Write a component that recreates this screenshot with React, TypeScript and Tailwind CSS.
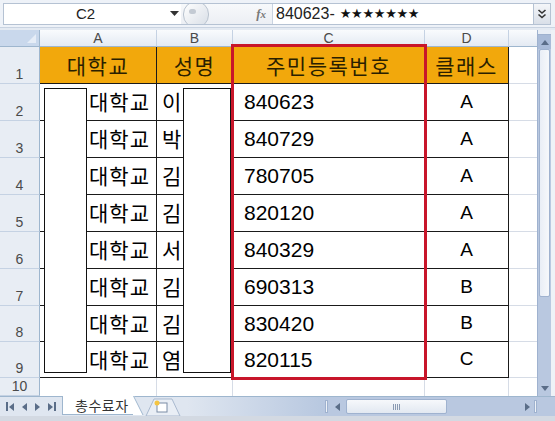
import React from "react";

const KR = { fontFamily: '"Noto Sans CJK KR", "Noto Sans", sans-serif' };
const AR = { fontFamily: '"Liberation Sans", Arial, sans-serif' };

const rows = [
  { n: "2", name: "이", id: "840623", cls: "A", h: "h-[37px]" },
  { n: "3", name: "박", id: "840729", cls: "A", h: "h-[37px]" },
  { n: "4", name: "김", id: "780705", cls: "A", h: "h-[37px]" },
  { n: "5", name: "김", id: "820120", cls: "A", h: "h-[37px]" },
  { n: "6", name: "서", id: "840329", cls: "A", h: "h-[37px]" },
  { n: "7", name: "김", id: "690313", cls: "B", h: "h-[37px]" },
  { n: "8", name: "김", id: "830420", cls: "B", h: "h-[36px]" },
  { n: "9", name: "염", id: "820115", cls: "C", h: "h-[36px]" },
];

function RowHead({ n }: { n: string }) {
  return (
    <div
      className="w-[40px] h-full shrink-0 flex items-end justify-center pb-[1px] bg-[#e8edf4] border-r border-b border-r-[#9eb6ce] border-b-[#c5d2e3] text-[14px] leading-[16px] text-[#4a4a4a]"
      style={AR}
    >
      {n}
    </div>
  );
}

function ColHead({ w, label }: { w: string; label: string }) {
  return (
    <div
      className={`${w} h-full shrink-0 flex items-center justify-center bg-gradient-to-b from-[#f9fbfd] to-[#e4eaf3] border-r border-b border-r-[#c5d2e3] border-b-[#9eb6ce] text-[14px] text-[#4a4a4a]`}
      style={AR}
    >
      {label}
    </div>
  );
}

function Tri({ dir }: { dir: "l" | "r" | "u" | "d" }) {
  const pts =
    dir === "l" ? "6,1 6,9 1,5" : dir === "r" ? "1,1 1,9 6,5" : dir === "u" ? "1,7 9,7 5,2" : "1,2 9,2 5,7";
  return (
    <svg width={dir === "l" || dir === "r" ? 7 : 10} height={dir === "l" || dir === "r" ? 10 : 9}>
      <polygon points={pts} fill="#5a6d88" />
    </svg>
  );
}

export default function App() {
  return (
    <div className="w-[555px] h-[421px] bg-[#e4eaf2] flex flex-col overflow-hidden select-none">
      {/* Formula bar */}
      <div className="h-[28px] shrink-0 flex items-stretch pt-[3px] pb-[2px] pl-[3px] pr-[4px] bg-[#eef2f8] border-b border-[#c9d3e1]">
        <div className="flex flex-1 border border-[#b5c2d3] bg-white">
          <div className="w-[163px] flex items-center justify-center text-[15px] text-[#222]" style={AR}>
            C2
          </div>
          <div className="w-[14px] flex items-center justify-center">
            <svg width="9" height="6">
              <polygon points="0,0 9,0 4.5,5" fill="#333" />
            </svg>
          </div>
          <div className="w-[92px] relative flex items-center justify-end pr-[6px] bg-gradient-to-b from-[#f7f9fb] to-[#eceff4] border-r border-[#c9d3e1] overflow-hidden">
            <div className="absolute left-[2px] top-[-3px] w-[26px] h-[27px] rounded-full border border-[#b9c3cf] bg-gradient-to-br from-[#ffffff] to-[#d8dee6]" />
            <div className="absolute left-[8px] top-[5px] w-[7px] h-[5px] rounded-full bg-[#c3cad3]" />
            <span className="text-[13px] italic font-bold text-[#7a7a7a]" style={{ fontFamily: '"Liberation Serif", serif' }}>
              f<span className="text-[11px]">x</span>
            </span>
          </div>
          <div className="flex-1 flex items-center pl-[3px] text-[16px] text-[#222]" style={AR}>
            840623-
            <span className="ml-[5px] text-[13px] tracking-[-0.3px] text-[#111]" style={{ fontFamily: '"DejaVu Sans", sans-serif' }}>
              ★★★★★★★
            </span>
          </div>
          <div className="w-[17px] flex items-center justify-center bg-gradient-to-b from-[#f4f6f9] to-[#d9dfe8] border-l border-[#b5c2d3]">
            <svg width="10" height="12" viewBox="0 0 10 12">
              <path d="M1.5 2 L5 5 L8.5 2 M1.5 6.5 L5 9.5 L8.5 6.5" stroke="#333" strokeWidth="1.6" fill="none" />
            </svg>
          </div>
        </div>
      </div>
      <div className="h-[2px] shrink-0 bg-[#e4eaf2]" />

      {/* Sheet area */}
      <div className="flex h-[366px] shrink-0">
        <div className="relative w-[537px] h-full bg-white flex flex-col">
          {/* column headers */}
          <div className="flex h-[17px] shrink-0">
            <div className="w-[40px] h-full shrink-0 relative bg-[#c9d8ec] border-r border-b border-r-[#9eb6ce] border-b-[#9eb6ce]">
              <svg className="absolute right-[3px] bottom-[3px]" width="9" height="9">
                <polygon points="9,0 9,9 0,9" fill="#e6edf7" />
              </svg>
            </div>
            <ColHead w="w-[117px]" label="A" />
            <ColHead w="w-[76px]" label="B" />
            <ColHead w="w-[192px]" label="C" />
            <ColHead w="w-[84px]" label="D" />
            <div className="flex-1 h-full bg-gradient-to-b from-[#f9fbfd] to-[#e4eaf3] border-b border-[#9eb6ce]" />
          </div>

          {/* row 1 */}
          <div className="flex h-[37px] shrink-0">
            <RowHead n="1" />
            {[
              ["w-[117px]", "대학교"],
              ["w-[76px]", "성명"],
              ["w-[192px]", "주민등록번호"],
              ["w-[84px]", "클래스"],
            ].map(([w, t]) => (
              <div
                key={t}
                className={`${w} h-full shrink-0 flex items-center justify-center pt-[2px] bg-[#f2a80c] border-r border-b border-[#1a1a1a] text-[21px] tracking-[1.5px] text-[#2a1f00]`}
                style={KR}
              >
                {t}
              </div>
            ))}
            <div className="flex-1 h-full border-b border-[#d6dce6]" />
          </div>

          {rows.map((r) => (
            <div key={r.n} className={`flex ${r.h} shrink-0`}>
              <RowHead n={r.n} />
              <div
                className="w-[117px] h-full shrink-0 flex items-center justify-end pr-[6px] border-r border-b border-[#1a1a1a] text-[21px] tracking-[1px] text-black"
                style={KR}
              >
                대학교
              </div>
              <div
                className="w-[76px] h-full shrink-0 flex items-center pl-[5px] border-r border-b border-[#1a1a1a] text-[21px] text-black"
                style={KR}
              >
                {r.name}
              </div>
              <div
                className="w-[192px] h-full shrink-0 flex items-center pl-[11px] border-r border-b border-[#1a1a1a] text-[21px] text-black"
                style={AR}
              >
                {r.id}
              </div>
              <div
                className="w-[84px] h-full shrink-0 flex items-center justify-center border-r border-b border-[#1a1a1a] text-[19px] text-black"
                style={AR}
              >
                {r.cls}
              </div>
              <div className="flex-1 h-full border-b border-[#d6dce6]" />
            </div>
          ))}

          {/* row 10 */}
          <div className="flex flex-1">
            <RowHead n="10" />
            <div className="w-[117px] h-full shrink-0 border-r border-[#d6dce6]" />
            <div className="w-[76px] h-full shrink-0 border-r border-[#d6dce6]" />
            <div className="w-[192px] h-full shrink-0 border-r border-[#d6dce6]" />
            <div className="w-[84px] h-full shrink-0 border-r border-[#d6dce6]" />
            <div className="flex-1 h-full" />
          </div>

          {/* redaction boxes */}
          <div className="absolute left-[44px] top-[58px] w-[43px] h-[285px] bg-white border border-[#111]" />
          <div className="absolute left-[183px] top-[58px] w-[48px] h-[285px] bg-white border border-[#111]" />
          {/* red highlight */}
          <div className="absolute left-[231px] top-[14px] w-[196px] h-[336px] border-[3px] border-[#c8162a]" />
        </div>

        {/* vertical scrollbar */}
        <div className="w-[18px] h-full shrink-0 flex">
          <div className="w-[14px] h-full flex flex-col bg-[#b9c8e0] border-l border-[#9fb2cf]">
            <div className="h-[5px] shrink-0 bg-[#e8eef6] border-b border-[#9fb2cf]" />
            <div className="h-[14px] shrink-0 flex items-center justify-center bg-[#a9bbd8]">
              <Tri dir="u" />
            </div>
            <div className="h-[248px] shrink-0 mx-[1px] rounded-[2px] bg-gradient-to-r from-[#e9eef6] to-[#f6f8fb] border border-[#9fb2cf]" />
            <div className="flex-1" />
            <div className="h-[16px] shrink-0 flex items-center justify-center">
              <Tri dir="d" />
            </div>
          </div>
          <div className="flex-1 h-full bg-[#eef2f7]" />
        </div>
      </div>

      {/* tab strip */}
      <div className="h-[20px] shrink-0 flex items-stretch bg-[#dfe6f0] border-t border-[#9eb6ce]">
        <div className="w-[62px] shrink-0 flex items-center justify-around px-[3px]">
          <span className="flex items-center">
            <span className="w-[1.5px] h-[9px] bg-[#5a6d88]" />
            <Tri dir="l" />
          </span>
          <Tri dir="l" />
          <Tri dir="r" />
          <span className="flex items-center">
            <Tri dir="r" />
            <span className="w-[1.5px] h-[9px] bg-[#5a6d88]" />
          </span>
        </div>
        <div className="relative w-[80px] shrink-0">
          <div className="absolute left-0 top-[-1px] h-[19px] w-[72px] bg-white border-l border-b border-[#9eb6ce] flex items-center pl-[12px] text-[14px] tracking-[0.5px] text-[#333]" style={KR}>
            총수료자
          </div>
          <svg className="absolute left-[71px] top-[-1px]" width="12" height="20">
            <polygon points="0,0 0,19 10,19 1,0" fill="#ffffff" />
            <line x1="0.5" y1="0" x2="10" y2="19" stroke="#9eb6ce" />
          </svg>
        </div>
        <div className="relative w-[45px] shrink-0">
          <svg className="absolute left-[0px] top-[0px]" width="45" height="19">
            <polygon points="4,19 12,2 30,2 38,19" fill="#e9eef5" stroke="#a9b9cf" />
            <rect x="15" y="6" width="10" height="9" fill="#fff" stroke="#7b8ca6" />
            <circle cx="15" cy="6" r="2.5" fill="#f5c542" />
          </svg>
        </div>
        <div className="w-[136px] shrink-0 bg-gradient-to-r from-[#dfe6f0] to-[#b8c8e0]" />
        {/* horizontal scrollbar */}
        <div className="flex-1 flex items-center bg-[#b9c8e0] pr-[18px]">
          <div className="w-[3px] h-[13px] ml-[2px] bg-[#eef2f7] border border-[#9fb2cf]" />
          <div className="w-[18px] flex justify-center">
            <Tri dir="l" />
          </div>
          <div className="w-[101px] h-[15px] rounded-[2px] bg-gradient-to-b from-[#f6f8fb] to-[#e2e8f1] border border-[#9fb2cf] flex items-center justify-center">
            <div className="flex gap-[1px]">
              <span className="w-[1px] h-[6px] bg-[#8a9ab2]" />
              <span className="w-[1px] h-[6px] bg-[#8a9ab2]" />
              <span className="w-[1px] h-[6px] bg-[#8a9ab2]" />
              <span className="w-[1px] h-[6px] bg-[#8a9ab2]" />
            </div>
          </div>
          <div className="flex-1" />
          <div className="w-[14px] flex justify-center">
            <Tri dir="r" />
          </div>
          <div className="w-[3px] h-[13px] bg-[#eef2f7] border border-[#9fb2cf]" />
        </div>
      </div>
      <div className="flex-1 bg-[#d3d9e2]" />
    </div>
  );
}
